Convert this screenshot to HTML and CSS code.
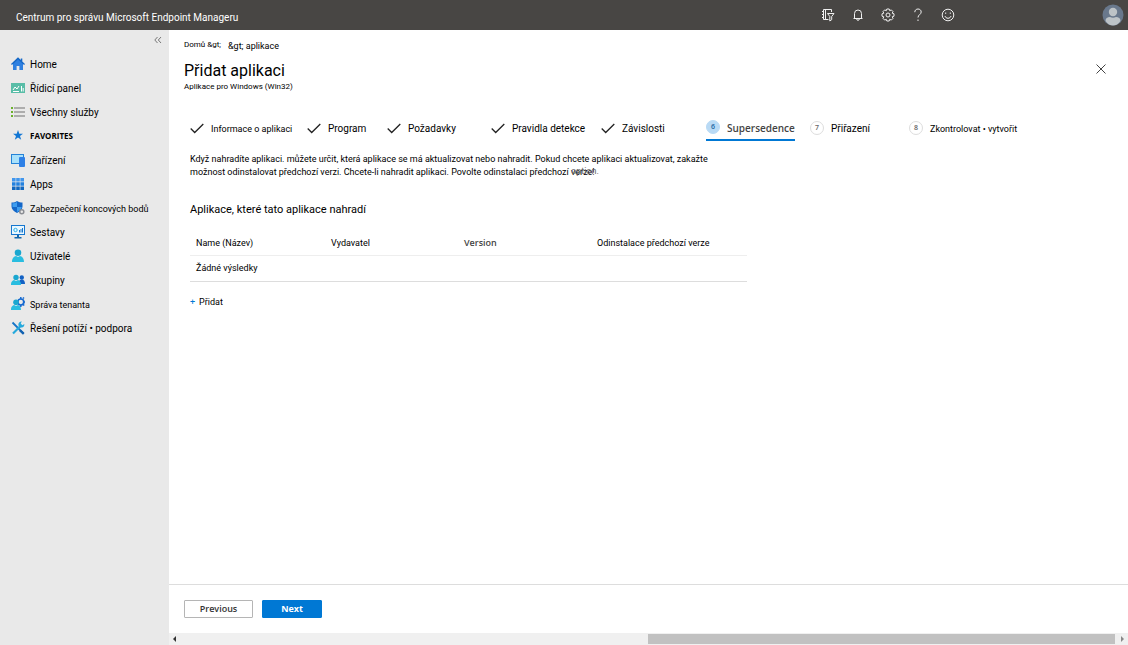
FILE: index.html
```html
<!DOCTYPE html>
<html lang="cs">
<head>
<meta charset="utf-8">
<title>Přidat aplikaci</title>
<link rel="stylesheet" href="styles.css">
</head>
<body>
<header class="topbar">
  <span class="brand">Centrum pro správu Microsoft Endpoint Manageru</span>
  <div class="tools">
    <button class="tool" aria-label="Directory filter"><svg viewBox="0 0 14 14"><path d="M7.500 11.500H2.500V1.500h8v2.500M4.500 1.500v10M1 3.500h2M1 6.500h2M1 9.500h2M6.500 5.500h6.500L10.700 8.500v3.200L8.800 13V8.500z"/></svg></button>
    <button class="tool" aria-label="Notifications"><svg viewBox="0 0 14 14"><path d="M2.500 10.500h9M3.500 10.500V5.500a3.500 3.500 0 0 1 7 0v5M5.700 11a1.300 1.300 0 0 0 2.600 0"/></svg></button>
    <button class="tool" aria-label="Settings"><svg viewBox="0 0 14 14"><path d="M5.800 1h2.400l.5 1.700 1.600-.8 1.700 1.700-.8 1.600 1.800.6v2.400l-1.800.6.8 1.600-1.700 1.700-1.600-.8-.5 1.700H5.800l-.5-1.700-1.600.8L2 10.400l.8-1.600L1 8.200V5.800l1.800-.6L2 3.600l1.700-1.700 1.600.8z"/><circle cx="7" cy="7" r="2"/></svg></button>
    <button class="tool" aria-label="Help"><svg viewBox="0 0 14 14"><path d="M3.800 4.200C3.800 2.200 5.200 1 7 1s3.200 1.200 3.200 3c0 2.500-3.200 2.800-3.200 5.500M7 11.500v1.500"/></svg></button>
    <button class="tool" aria-label="Feedback"><svg viewBox="0 0 14 14"><circle cx="7" cy="7" r="5.800"/><path d="M4 8c.6 3 5.400 3 6 0M4.700 4.500v1.400M9.300 4.500v1.400"/></svg></button>
  </div>
  <button class="avatar" aria-label="Account"><svg viewBox="0 0 22 22"><circle cx="11" cy="11" r="10.500" fill="#69788c"/><circle cx="11" cy="8" r="4.200" fill="#bdc3c7"/><path d="M3.500 17c0-3 2-4 4.500-4 2 1 4 1 6 0 2.500 0 4.500 1 4.500 4-4 6-11 6-15 0z" fill="#bdc3c7"/></svg></button>
</header>
<div class="shell">
  <nav class="sidebar">
    <button class="collapse" aria-label="Collapse menu"><svg viewBox="0 0 8 8"><path d="M3.500 1L.8 4l2.700 3M7 1L4.300 4 7 7"/></svg></button>
    <ul class="menu">
      <li><a class="item" href="#"><svg viewBox="0 0 14 14"><path d="M2 6v7h3.600V9h2.800v4H12V6L7 1.500z" fill="#2f80e0"/><path d="M7 .3L0 7l.9.9L7 2.500l6.100 5.400.9-.9-2.700-2.600V1.500H9.800v1.400z" fill="#1668c7"/></svg>Home</a></li>
      <li><a class="item" href="#"><svg viewBox="0 0 14 14"><path d="M0 2h14v10H0z" fill="#59bda7"/><path d="M2 9l2-3 2 2 2-3M2 10.500h6M10.500 5v5.500M12.200 7v3.500" fill="none" stroke="#fff"/></svg>Řídicí panel</a></li>
      <li><a class="item" href="#"><svg viewBox="0 0 14 14"><path d="M3 3h11M3 7h11M3 11h11" stroke="#999" stroke-width="1.500"/><path d="M0 3h2M0 7h2M0 11h2" stroke="#6bb12c" stroke-width="2"/></svg>Všechny služby</a></li>
      <li class="heading"><svg viewBox="0 0 14 14"><path d="M7 2l1.300 3.700H12L9 8l1.200 3.800L7 9.500l-3.200 2.300L5 8 2 5.700h3.700z" fill="#1176d4"/></svg>FAVORITES</li>
      <li><a class="item" href="#"><svg viewBox="0 0 14 14"><path d="M0 1h13v10H0z" fill="#2583d8"/><path d="M1 2h11v8H1z" fill="#a9e1fb"/><rect x="8" y="4" width="6" height="10" rx="1" fill="#2e80e6"/></svg>Zařízení</a></li>
      <li><a class="item" href="#"><svg viewBox="0 0 14 14"><path d="M1 1h3.600v3.600H1zM5.200 1h3.600v3.600H5.200zM9.400 1H13v3.600H9.400z" fill="#4196ed"/><path d="M1 5.200h3.600v3.600H1zM5.200 5.200h3.600v3.600H5.200zM9.400 5.200H13v3.600H9.400z" fill="#2381df"/><path d="M1 9.400h3.600V13H1zM5.200 9.400h3.600V13H5.200zM9.400 9.400H13V13H9.400z" fill="#1267bf"/></svg>Apps</a></li>
      <li><a class="item dense" href="#"><svg viewBox="0 0 14 14"><path d="M6 0c2 1 3.500 1.500 5.500 1.500v4c0 3-2.500 5-5.500 6.500C3 10.500.5 8.500.5 5.500v-4C3 1.500 4.500 1 6 0z" fill="#1467c8"/><path d="M6 1v5H1.500V2.300C3.500 2.300 4.800 1.800 6 1zM6 6h4.800C10.500 8.500 8 10 6 11z" fill="#3d9df0"/><circle cx="10.800" cy="10.800" r="2" fill="#e9e9e9" stroke="#8b8e94" stroke-width="1.500"/></svg>Zabezpečení koncových bodů</a></li>
      <li><a class="item" href="#"><svg viewBox="0 0 14 14"><path d="M0 0h14v10H0z" fill="#1677cf"/><path d="M1 1h12v8H1z" fill="#e9f7ff"/><path d="M6 10h2v2h2.500v1.500h-7V12H6z" fill="#1267ac"/><circle cx="4.500" cy="5" r="1.700" fill="none" stroke="#2fb0e8"/><path d="M8.500 5v2.500M10 4v3.500M11.500 3v4.500" stroke="#1677cf"/></svg>Sestavy</a></li>
      <li><a class="item" href="#"><svg viewBox="0 0 14 14"><path d="M1 13c0-4 2-5.500 4-6l2 1 2-1c2 .5 4 2 4 6z" fill="#29bde0"/><circle cx="7" cy="3.800" r="3.300" fill="#19a7d0"/></svg>Uživatelé</a></li>
      <li><a class="item" href="#"><svg viewBox="0 0 14 14"><path d="M7.500 11c0-3 1-4 3-4.500 2.500 0 3.500 2 3.500 4.500z" fill="#1261c4"/><circle cx="10.800" cy="4.500" r="2.200" fill="#1261c4"/><path d="M0 12c0-3.500 1.500-4.500 3-5l2 1 2-1c1.500.5 3 1.500 3 5z" fill="#29bde0"/><circle cx="5" cy="4.400" r="2.700" fill="#19a7d0"/></svg>Skupiny</a></li>
      <li><a class="item dense" href="#"><svg viewBox="0 0 14 14"><circle cx="9.800" cy="5" r="3" fill="none" stroke="#1669d0" stroke-width="1.700"/><path d="M9.800 0v2M9.800 8v2M13 5h1M12 1.500l1-1M12.200 7.500l1 1" stroke="#1669d0" stroke-width="1.500"/><path d="M0 13c0-3.500 1.500-4.500 3-5l2 1 2-1c1.500.5 3 1.500 3 5z" fill="#29bde0"/><circle cx="5" cy="5.200" r="2.800" fill="#19a7d0"/></svg>Správa tenanta</a></li>
      <li><a class="item" href="#"><svg viewBox="0 0 14 14"><path d="M1.500 1.500l11 11" stroke="#1674c7" stroke-width="1.800"/><path d="M2 12.500L10 4.500" stroke="#25a9dc" stroke-width="2.200"/><path d="M13.300 3A3 3 0 1 1 10.800.6L9.700 2.500l1.700 1.700z" fill="#25a9dc"/><path d="M9 9.300L12.800 12.800" stroke="#1261b0" stroke-width="2.300"/></svg>Řešení potíží • podpora</a></li>
    </ul>
  </nav>
  <main class="blade">
    <div class="content">
      <div class="crumbs"><a class="crumb-home" href="#">Domů &amp;gt;</a><a class="crumb-apps" href="#">&amp;gt; aplikace</a></div>
      <div class="title-row">
        <div><h1 class="title">Přidat aplikaci</h1><p class="subtitle">Aplikace pro Windows (Win32)</p></div>
        <button class="close" aria-label="Close"><svg viewBox="0 0 10 10"><path d="M.5.5l9 9M9.500.5l-9 9"/></svg></button>
      </div>
      <ol class="steps">
        <li class="step dense"><svg class="check" viewBox="0 0 14 12"><path d="M.7 5.500l4 4L13.300 1"/></svg>Informace o aplikaci</li>
        <li class="step"><svg class="check" viewBox="0 0 14 12"><path d="M.7 5.500l4 4L13.300 1"/></svg>Program</li>
        <li class="step"><svg class="check" viewBox="0 0 14 12"><path d="M.7 5.500l4 4L13.300 1"/></svg>Požadavky</li>
        <li class="step"><svg class="check" viewBox="0 0 14 12"><path d="M.7 5.500l4 4L13.300 1"/></svg>Pravidla detekce</li>
        <li class="step"><svg class="check" viewBox="0 0 14 12"><path d="M.7 5.500l4 4L13.300 1"/></svg>Závislosti</li>
        <li class="step current" aria-current="step"><span class="num">6</span>Supersedence</li>
        <li class="step"><span class="num">7</span>Přiřazení</li>
        <li class="step dense"><span class="num">8</span>Zkontrolovat • vytvořit</li>
      </ol>
      <div class="panel">
        <p class="intro">Když nahradíte aplikaci. můžete určit, která aplikace se má aktualizovat nebo nahradit. Pokud chcete aplikaci aktualizovat, zakažte<br>možnost odinstalovat předchozí verzi. Chcete-li nahradit aplikaci. Povolte odinstalaci předchozí <span class="last">verze!<span class="ghost">option.</span></span></p>
        <h2 class="section">Aplikace, které tato aplikace nahradí</h2>
        <table class="apps">
          <colgroup><col class="col-name"><col class="col-mid"><col class="col-mid"><col></colgroup>
          <thead><tr><th>Name (Název)</th><th>Vydavatel</th><th class="version">Version</th><th>Odinstalace předchozí verze</th></tr></thead>
          <tbody><tr><td colspan="4">Žádné výsledky</td></tr></tbody>
        </table>
        <button class="add"><span class="plus">+</span>Přidat</button>
      </div>
    </div>
    <footer class="actions"><button class="btn">Previous</button><button class="btn primary">Next</button></footer>
    <div class="scrollbar"><span class="arrow left"></span><div class="track"><div class="thumb"></div></div><span class="arrow right"></span></div>
  </main>
</div>
</body>
</html>
```
FILE: styles.css
```css
* { box-sizing: border-box; }
body {
  margin: 0;
  min-height: 100vh;
  display: flex;
  flex-direction: column;
  background: #fff;
  color: #000;
  font: 10px/14px Roboto, sans-serif;
}
button { padding: 0; border: 0; background: none; color: inherit; font: inherit; }
a { color: inherit; text-decoration: none; }
h1, h2, p, ul, ol { margin: 0; padding: 0; font-weight: 400; list-style: none; }
svg { display: block; flex: none; }

.topbar {
  height: 30px;
  display: flex;
  align-items: center;
  padding: 0 4px 0 16px;
  background: #484644;
  color: #fff;
}
.brand { flex: 1; padding-top: 5px; }
.tools { display: flex; gap: 16px; margin-right: 147px; }
.tool, .tool svg { width: 14px; height: 14px; }
.tool svg { fill: none; stroke: #f0f0f0; }
.avatar, .avatar svg { width: 22px; height: 22px; }

.shell { flex: 1; display: flex; }
.sidebar { width: 169px; flex: none; padding: 6px 7px 0 11px; background: #e9e9e9; }
.collapse { display: block; margin-left: auto; }
.collapse svg { width: 8px; height: 8px; fill: none; stroke: #777; }
.menu { padding-top: 9px; }
.item, .heading { height: 24px; display: flex; align-items: center; gap: 5px; white-space: nowrap; }
.item svg, .heading svg { width: 14px; height: 14px; margin-bottom: 2px; }
.heading { height: 22px; margin-bottom: 2px; font: 700 8px/14px "Open Sans", sans-serif; }
.dense { font-size: 9px; }

.blade { flex: 1; min-width: 0; display: flex; flex-direction: column; }
.content { flex: 1; padding: 8px 20px 0 15px; }
.crumbs { display: flex; gap: 7px; }
.crumb-home { font-size: 8px; line-height: 13px; }
.crumb-apps { font-size: 9px; line-height: 16px; }
.title-row { display: flex; justify-content: space-between; align-items: flex-start; padding-top: 7px; }
.title { font-size: 16px; line-height: 20px; }
.subtitle { font-size: 8px; line-height: 12px; }
.close { padding: 3px 2px; }
.close svg { width: 10px; height: 10px; fill: none; stroke: #444; }

.steps {
  display: grid;
  grid-template-columns: 117px 80px 104px 110px 105px 104px 99px auto;
  padding: 23px 0 0 6px;
}
.step { justify-self: start; height: 25px; display: flex; align-items: center; gap: 7px; white-space: nowrap; }
.check { width: 14px; height: 12px; fill: none; stroke: #222; stroke-width: 1.3; }
.num {
  width: 14px;
  height: 14px;
  margin-bottom: 2px;
  border: 1px solid #ddd;
  border-radius: 50%;
  color: #666;
  font: 600 7px/12px "Open Sans", sans-serif;
  text-align: center;
}
.current { border-bottom: 2px solid #0078d4; color: #444; font: 600 10px/14px "Open Sans", sans-serif; }
.current .num { border-color: #b9daf5; background: #b9daf5; color: #19639e; }

.panel { padding: 12px 0 0 6px; }
.intro { font-size: 9px; line-height: 13px; }
.last { position: relative; }
.ghost { position: absolute; left: 0; top: -2px; color: #666; }
.section { padding-top: 23px; font-size: 11px; line-height: 16px; }
.apps { width: 557px; max-width: 100%; margin-top: 13px; border-collapse: collapse; table-layout: fixed; font-size: 9px; }
.col-name { width: 135px; }
.col-mid { width: 133px; }
.apps th, .apps td { padding: 0 6px; font-weight: 400; text-align: left; }
.apps th { height: 24px; border-bottom: 1px solid #eee; white-space: nowrap; }
.apps td { height: 26px; border-bottom: 1px solid #ddd; }
.apps .version { color: #444; font: 600 9px/14px "Open Sans", sans-serif; }
.add { display: flex; gap: 4px; margin-top: 13px; font-size: 9px; }
.plus { color: #0078d4; }

.actions { display: flex; gap: 9px; padding: 15px; height: 49px; border-top: 1px solid #ddd; }
.btn { width: 69px; height: 18px; border: 1px solid #b5b5b5; border-radius: 1px; color: #333; font: 600 9px/14px "Open Sans", sans-serif; }
.primary { width: 60px; border-color: #0078d4; background: #0078d4; color: #fff; font-weight: 700; }
.scrollbar { height: 12px; display: flex; align-items: center; justify-content: space-between; padding: 0 4px; background: #f0f0f0; }
.track { flex: 1; margin: 0 6px 0 4px; }
.thumb { width: 50%; height: 10px; margin-left: auto; background: #c1c1c1; }
.arrow { border: 3px solid transparent; }
.left { border-left: 0; border-right-color: #333; }
.right { border-right: 0; border-left-color: #888; }
```
